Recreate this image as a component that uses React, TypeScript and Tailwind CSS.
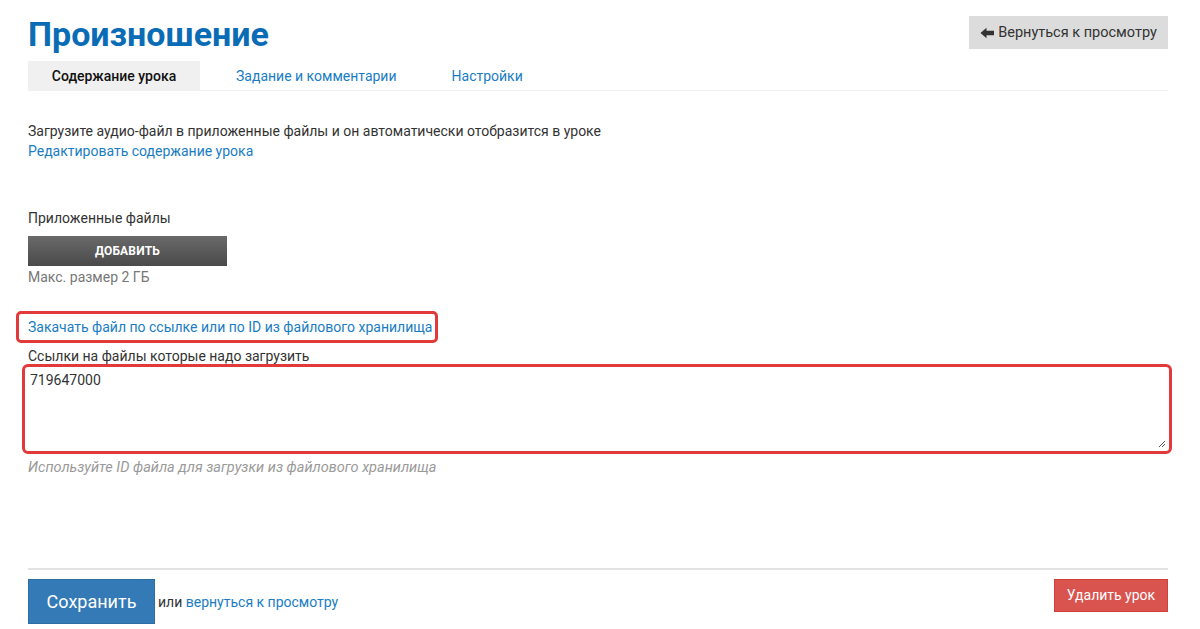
import React from 'react';

const font = { fontFamily: 'Roboto, "Noto Sans", sans-serif' };

const tabs = [
  { id: 'content', title: 'Содержание урока', active: true },
  { id: 'task', title: 'Задание и комментарии', active: false },
  { id: 'settings', title: 'Настройки', active: false },
];

const App: React.FC = () => {
  return (
    <div className="w-[1200px] h-[629px] bg-white text-[#333] overflow-hidden" style={font}>
      <div className="px-[28px] pt-[14px] w-[1196px]">
        {/* Header */}
        <div className="flex items-start justify-between">
          <h1 className="text-[34px] leading-[40px] font-bold text-[#0b6cb6]">Произношение</h1>
          <button className="mt-[2px] h-[33px] w-[199px] justify-center bg-[#dcdcdc] flex items-center gap-[2px] text-[14.5px] text-[#333] whitespace-nowrap">
            <svg width="15" height="12" viewBox="0 0 15 12" className="mr-[1px]">
              <path d="M0.5 6 L6.5 0.8 L6.5 3.8 L14 3.8 L14 8.2 L6.5 8.2 L6.5 11.2 Z" fill="#333" />
            </svg>
            Вернуться к просмотру
          </button>
        </div>

        {/* Tabs */}
        <div className="mt-[7px] flex border-b border-[#eeeeee] h-[30px]">
          {tabs.map((tab) => (
            <div
              key={tab.id}
              className={`h-[30px] flex items-center text-[14px] whitespace-nowrap ${tab.active ? 'bg-[#f0f0f0] font-medium text-[#111] justify-center w-[172px]' : 'text-[#1a7dc4] pl-[36px] pr-[19px]'}`}
            >
              {tab.title}
            </div>
          ))}
        </div>

        {/* Content */}
        <div className="mt-[30px] text-[14px] leading-[20px]">
          <p>Загрузите аудио-файл в приложенные файлы и он автоматически отобразится в уроке</p>
          <a className="text-[#1a7dc4]">Редактировать содержание урока</a>
        </div>

        <div className="mt-[47px] text-[14px] leading-[20px]">Приложенные файлы</div>
        <button className="mt-[8px] w-[199px] h-[30px] bg-gradient-to-b from-[#6a6a6a] to-[#4a4a4a] text-white text-[12px] font-bold uppercase tracking-[0.2px]">
          Добавить
        </button>
        <div className="mt-[1px] text-[14px] leading-[20px] text-[#777]">Макс. размер 2 ГБ</div>

        {/* Link box */}
        <div className="mt-[24px] -ml-[12px] w-[422px] h-[32px] border-[3px] border-[#e2393a] rounded-[5px] flex items-center pl-[9px]">
          <a className="text-[14px] text-[#1a7dc4] whitespace-nowrap">Закачать файл по ссылке или по ID из файлового хранилища</a>
        </div>

        <div className="mt-[3px] text-[14px] leading-[20px]">Ссылки на файлы которые надо загрузить</div>
        <div className="-mt-[2px] -ml-[6px] w-[1150px] h-[90px] border-[3px] border-[#e2393a] rounded-[6px] relative">
          <textarea
            className="w-full h-full resize-none outline-none text-[14px] px-[5px] pt-[3px] text-[#333]"
            style={font}
            defaultValue="719647000"
          />
          <svg width="8" height="8" viewBox="0 0 8 8" className="absolute right-[3px] bottom-[3px]">
            <path d="M7 1 L1 7 M7 4 L4 7" stroke="#555" strokeWidth="1" />
          </svg>
        </div>
        <div className="mt-[4px] text-[14.5px] leading-[20px] italic text-[#9a9a9a]">
          Используйте ID файла для загрузки из файлового хранилища
        </div>

        {/* Footer */}
        <div className="mt-[90px] border-t-2 border-[#e2e2e2] pt-[9px] flex items-start justify-between">
          <div className="flex items-center">
            <button className="w-[127px] h-[45px] bg-[#337ab7] border border-[#2e6da4] text-white text-[18px]">Сохранить</button>
            <span className="ml-[3px] text-[14px] mt-[2px]">
              или <a className="text-[#1a7dc4]">вернуться к просмотру</a>
            </span>
          </div>
          <button className="w-[114px] h-[33px] bg-[#d9534f] border border-[#d43f3a] text-white text-[14px]">Удалить урок</button>
        </div>
      </div>
    </div>
  );
};

export default App;
